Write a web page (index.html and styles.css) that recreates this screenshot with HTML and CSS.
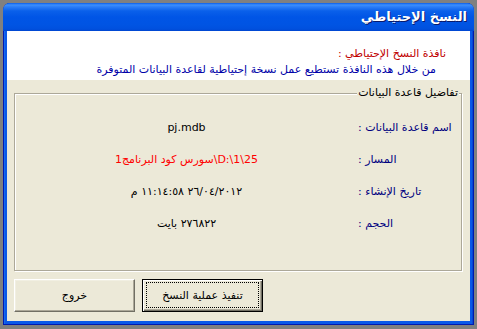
FILE: index.html
```html
<!DOCTYPE html>
<html lang="ar">
<head>
<meta charset="utf-8">
<title>النسخ الإحتياطي</title>
<link rel="stylesheet" href="styles.css">
</head>
<body>
<div class="window">
  <div class="titlebar" dir="rtl">
    <span class="title">النسخ الإحتياطي</span>
  </div>
  <div class="client">
    <div class="header" dir="rtl">
      <div class="header-title">نافذة النسخ الإحتياطي :</div>
      <div class="header-desc">من خلال هذه النافذة تستطيع عمل نسخة إحتياطية لقاعدة البيانات المتوفرة</div>
    </div>
    <div class="content">
      <div class="group" dir="rtl">
        <span class="legend">تفاضيل قاعدة البيانات</span>
        <div class="rows">
          <div class="label">اسم قاعدة البيانات :</div>
          <div class="value">pj.mdb</div>
          <div class="label">المسار :</div>
          <div class="value path">D:\1\25\سورس كود البرنامج1</div>
          <div class="label">تاريخ الإنشاء :</div>
          <div class="value">٢٦/٠٤/٢٠١٢ ١١:١٤:٥٨ م</div>
          <div class="label">الحجم :</div>
          <div class="value">٢٧٦٨٢٢ بايت</div>
        </div>
      </div>
      <div class="buttons">
        <button class="btn" dir="rtl">خروج</button>
        <button class="btn btn-default" dir="rtl"><span class="focus">تنفيذ عملية النسخ</span></button>
      </div>
    </div>
  </div>
</div>
</body>
</html>
```

FILE: styles.css
```css
html, body {
  margin: 0;
  padding: 0;
}
body {
  background: #808080;
  padding: 3px;
  height: 329px;
  box-sizing: border-box;
  font-family: "DejaVu Sans", "Noto Sans", sans-serif;
  font-size: 11px;
  color: #000;
}
.window {
  width: 471px;
  height: 322px;
  box-sizing: border-box;
  display: flex;
  flex-direction: column;
  background: #0a58e8;
  border: 1px solid #0019b0;
  border-top: none;
  border-radius: 7px 7px 0 0;
  box-shadow: inset 1px 0 0 #166aee, inset -1px 0 0 #0848d0;
}
.titlebar {
  height: 28px;
  flex: none;
  margin: 0 -1px;
  border-radius: 7px 7px 0 0;
  background: linear-gradient(to bottom,
    #0a5ee8 0px, #3d8ffc 2px, #2a7cf6 4px, #0a60ea 8px,
    #0055e6 14px, #0054e3 22px, #0050de 26px, #0046d0 28px);
  display: flex;
  align-items: center;
  padding: 0 7px 1px 7px;
  box-sizing: border-box;
}
.title {
  color: #fff;
  font-weight: bold;
  font-size: 13px;
  text-shadow: 1px 1px 0 #0a1a6a;
}
.client {
  flex: 1;
  margin: 0 3px 3px 3px;
  display: flex;
  flex-direction: column;
  background: #ece9d8;
}
.header {
  height: 49px;
  flex: none;
  background: #fff;
  padding-top: 15px;
  box-sizing: border-box;
  line-height: 16px;
}
.header-title {
  color: #c00000;
  padding-right: 24px;
}
.header-desc {
  color: #0000a8;
  padding-right: 34px;
}
.content {
  flex: 1;
  padding: 13px 8px 0 7px;
  display: flex;
  flex-direction: column;
}
.group {
  position: relative;
  height: 178px;
  width: 448px;
  box-sizing: border-box;
  border: 1px solid #aca899;
  box-shadow: inset 1px 1px 0 #fff, 1px 1px 0 #fff;
  padding-top: 17px;
}
.legend {
  position: absolute;
  top: -8px;
  right: 2px;
  background: #ece9d8;
  padding: 0 1px;
  line-height: 14px;
}
.rows {
  display: grid;
  grid-template-columns: 103px 1fr;
  grid-auto-rows: 32px;
  align-items: center;
}
.label {
  color: #000080;
  text-align: left;
}
.value {
  text-align: center;
}
.path {
  color: #ff0000;
}
.buttons {
  display: flex;
  gap: 7px;
  margin-top: 8px;
}
.btn {
  width: 121px;
  height: 33px;
  box-sizing: border-box;
  background: #ece9d8;
  font: inherit;
  color: #000;
  padding: 0;
  border: 1px solid;
  border-color: #fff #716f64 #716f64 #fff;
  box-shadow: inset -1px -1px 0 #aca899, inset 1px 1px 0 #f1efe2;
  display: flex;
  align-items: center;
  justify-content: center;
}
.btn-default {
  border: 1px solid #000;
  box-shadow: inset 1px 1px 0 #fff, inset -1px -1px 0 #716f64, inset -2px -2px 0 #aca899;
  padding: 2px 3px 3px 3px;
}
.focus {
  flex: 1;
  align-self: stretch;
  display: flex;
  align-items: center;
  justify-content: center;
  border: 1px dotted #000;
}
```
